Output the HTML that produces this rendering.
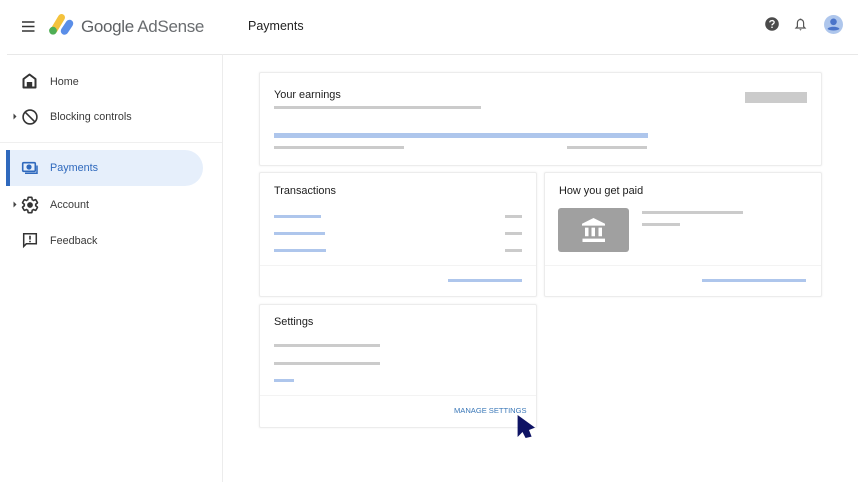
<!DOCTYPE html>
<html><head><meta charset="utf-8"><style>
html,body{margin:0;padding:0;background:#fff}
#p{position:relative;width:858px;height:482px;overflow:hidden;background:#fff;font-family:"Liberation Sans",sans-serif;color:#3c4043}
#p div{position:absolute}
.t{white-space:nowrap;line-height:14px}
.c{background:#fff;border:1px solid #ececec;box-shadow:0 0 2px rgba(0,0,0,.07);box-sizing:border-box;border-radius:2px}
.g{background:#cbcbcb}.b{background:#aec6ec}
.n{font-size:10.8px;color:#3a3a3a}
.h{font-size:10.9px;color:#1c1c1c}
.l{background:#f3f3f3;height:1px}
svg{position:absolute;overflow:visible}
</style></head><body><div id="p">
<div style="left:7px;top:54px;width:851px;height:1px;background:#e8e8e8"></div>
<div style="left:222px;top:54px;width:1px;height:428px;background:#ececec"></div>

<svg style="left:22px;top:21px" width="13" height="11"><path d="M0 1h12.500M0 5.500h12.500M0 10h12.500" stroke="#333" stroke-width="1.400"/></svg>
<svg style="left:48px;top:13px" width="26" height="24" viewBox="0 0 26 24">
<path d="M6 17 13.500 4.500" stroke="#f4c23c" stroke-width="7" stroke-linecap="round"/>
<path d="M16.500 18 21.500 10.500" stroke="#5a8ee8" stroke-width="7.500" stroke-linecap="round"/>
<circle cx="5" cy="17.700" r="3.900" fill="#4fae55"/></svg>
<div class="t" style="left:81px;top:17px;font-size:17px;line-height:20px;letter-spacing:-.33px;color:#6a6d70"><span style="color:#5f6265">Google</span> AdSense</div>
<div class="t" style="left:248px;top:19px;font-size:12.500px;color:#222">Payments</div>

<svg style="left:765px;top:17px" width="14" height="14" viewBox="0 0 14 14"><circle cx="7" cy="7" r="6.800" fill="#4b4b4b"/><path d="M4.800 5.400C4.900 3 9.200 3 9.200 5.300 9.200 6.800 7 6.800 7 8.400" fill="none" stroke="#fff" stroke-width="1.300"/><rect x="6.300" y="9.600" width="1.400" height="1.400" fill="#fff"/></svg>
<svg style="left:795px;top:18px" width="11" height="13" viewBox="0 0 11 13"><path d="M5.500 1.500C3.300 1.500 2.400 3.200 2.400 5V8.500L1 10H10L8.600 8.500V5C8.600 3.200 7.700 1.500 5.500 1.500Z" fill="none" stroke="#555" stroke-width="1.200"/><path d="M4.300 11.300H6.700L5.500 12.600Z M4.700 .6H6.300V2H4.700Z" fill="#555"/></svg>
<svg style="left:824px;top:15px" width="19" height="19" viewBox="0 0 19 19"><circle cx="9.500" cy="9.500" r="9.500" fill="#aec6ec"/><circle cx="9.500" cy="6.800" r="3.300" fill="#4a74c9"/><path d="M3.500 14C4.500 11 14.500 11 15.500 14 13 16 6 16 3.500 14Z" fill="#4a74c9"/></svg>

<svg style="left:22px;top:73px" width="15" height="16" viewBox="0 0 15 16"><path d="M7.500 1.500 1.500 6V14.500H13.500V6Z" fill="none" stroke="#333" stroke-width="2" stroke-linejoin="round"/><path d="M4.800 14.500V9H10.200V14.500Z" fill="#333"/></svg>
<div class="t n" style="left:50px;top:75px">Home</div>
<svg style="left:13px;top:113px" width="4" height="7"><path d="M0.500 0.500 3.500 3.500 0.500 6.500Z" fill="#444"/></svg>
<svg style="left:22px;top:109px" width="16" height="16" viewBox="0 0 16 16"><circle cx="8" cy="8" r="6.900" fill="none" stroke="#333" stroke-width="1.600"/><path d="M3.200 3.200 12.800 12.800" stroke="#333" stroke-width="1.600"/></svg>
<div class="t n" style="left:50px;top:110px">Blocking controls</div>
<div style="left:0;top:142px;width:222px;height:1px;background:#efefef"></div>

<div style="left:6px;top:150px;width:197px;height:36px;background:#e6effb;border-radius:0 18px 18px 0"></div>
<div style="left:6px;top:150px;width:4px;height:36px;background:#2f69bd"></div>
<svg style="left:22px;top:162px" width="16" height="13" viewBox="0 0 16 13"><rect x=".7" y=".7" width="12.600" height="8.600" rx="1" fill="none" stroke="#2f69bd" stroke-width="1.600"/><circle cx="7" cy="5" r="2.600" fill="#2f69bd"/><path d="M15 3.500V11.200H3" fill="none" stroke="#2f69bd" stroke-width="1.500"/></svg>
<div class="t n" style="left:50px;top:161px;color:#2f69bd">Payments</div>

<svg style="left:13px;top:201px" width="4" height="7"><path d="M0.500 0.500 3.500 3.500 0.500 6.500Z" fill="#444"/></svg>
<svg style="left:22px;top:197px" width="16" height="16" viewBox="2 2 20 20"><path d="M19.140 12.940c.04-.3.06-.61.06-.94 0-.32-.02-.64-.07-.94l2.030-1.580c.18-.14.23-.41.12-.61l-1.920-3.320c-.12-.22-.37-.29-.59-.22l-2.390.96c-.5-.38-1.030-.7-1.620-.94l-.36-2.540c-.04-.24-.24-.41-.48-.41h-3.840c-.24 0-.43.17-.47.41l-.36 2.540c-.59.24-1.130.57-1.620.94l-2.390-.96c-.22-.08-.47 0-.59.22L2.740 8.870c-.12.21-.08.47.12.61l2.030 1.580c-.05.3-.09.63-.09.94s.02.64.07.94l-2.030 1.580c-.18.14-.23.41-.12.61l1.920 3.320c.12.22.37.29.59.22l2.390-.96c.5.38 1.030.7 1.620.94l.36 2.540c.05.24.24.41.48.41h3.840c.24 0 .44-.17.47-.41l.36-2.540c.59-.24 1.130-.56 1.620-.94l2.390.96c.22.08.47 0 .59-.22l1.920-3.320c.12-.22.07-.47-.12-.61l-2.010-1.580z" fill="none" stroke="#333" stroke-width="2"/><circle cx="12" cy="12" r="3.600" fill="#333"/></svg>
<div class="t n" style="left:50px;top:198px">Account</div>

<svg style="left:23px;top:233px" width="14" height="15" viewBox="0 0 14 15"><path d="M.7.700H13.300V10.800H3.300L.7 13.400Z" fill="none" stroke="#333" stroke-width="1.500"/><path d="M7 2.800V6.600M7 7.800V9.200" stroke="#333" stroke-width="1.600"/></svg>
<div class="t n" style="left:50px;top:234px">Feedback</div>

<div class="c" style="left:259px;top:72px;width:563px;height:94px"></div>
<div class="t h" style="left:274px;top:88px">Your earnings</div>
<div class="g" style="left:274px;top:106px;width:207px;height:3px"></div>
<div class="g" style="left:745px;top:92px;width:62px;height:11px"></div>
<div class="b" style="left:274px;top:133px;width:374px;height:5px"></div>
<div class="g" style="left:274px;top:146px;width:130px;height:3px"></div>
<div class="g" style="left:567px;top:146px;width:80px;height:3px"></div>

<div class="c" style="left:259px;top:172px;width:278px;height:125px"></div>
<div class="t h" style="left:274px;top:184px">Transactions</div>
<div class="b" style="left:274px;top:215px;width:47px;height:3px"></div>
<div class="g" style="left:505px;top:215px;width:17px;height:3px"></div>
<div class="b" style="left:274px;top:232px;width:51px;height:3px"></div>
<div class="g" style="left:505px;top:232px;width:17px;height:3px"></div>
<div class="b" style="left:274px;top:249px;width:52px;height:3px"></div>
<div class="g" style="left:505px;top:249px;width:17px;height:3px"></div>
<div class="l" style="left:260px;top:265px;width:276px"></div>
<div class="b" style="left:448px;top:279px;width:74px;height:3px"></div>

<div class="c" style="left:544px;top:172px;width:278px;height:125px"></div>
<div class="t h" style="left:559px;top:184px">How you get paid</div>
<div style="left:558px;top:208px;width:71px;height:44px;background:#a0a0a0;border-radius:3px"></div>
<svg style="left:581px;top:218px" width="25" height="25" viewBox="0 0 25 25"><path d="M12.500 0 24 6V8H1V6Z M1.500 21.500H24V25H1.500Z M4 10H7.500V19H4Z M10.500 10H14V19H10.500Z M17.500 10H21V19H17.500Z" fill="#fff" transform="scale(1 .96)"/></svg>
<div class="g" style="left:642px;top:211px;width:101px;height:3px"></div>
<div class="g" style="left:642px;top:223px;width:38px;height:3px"></div>
<div class="l" style="left:545px;top:265px;width:276px"></div>
<div class="b" style="left:702px;top:279px;width:104px;height:3px"></div>

<div class="c" style="left:259px;top:304px;width:278px;height:124px"></div>
<div class="t h" style="left:274px;top:315px">Settings</div>
<div class="g" style="left:274px;top:344px;width:106px;height:3px"></div>
<div class="g" style="left:274px;top:362px;width:106px;height:3px"></div>
<div class="b" style="left:274px;top:379px;width:20px;height:3px"></div>
<div class="l" style="left:260px;top:395px;width:276px"></div>
<div class="t" style="left:454px;top:404px;font-size:7.600px;color:#3b78b8;letter-spacing:-.03px">MANAGE SETTINGS</div>
<svg style="left:516px;top:415px" width="20" height="25" viewBox="0 0 20 25"><path d="M1.600 0 19 12.600 13 15 15.600 21.600 9.600 23 6.500 17 1.600 22Z" fill="#0e1364"/></svg>
</div></body></html>
